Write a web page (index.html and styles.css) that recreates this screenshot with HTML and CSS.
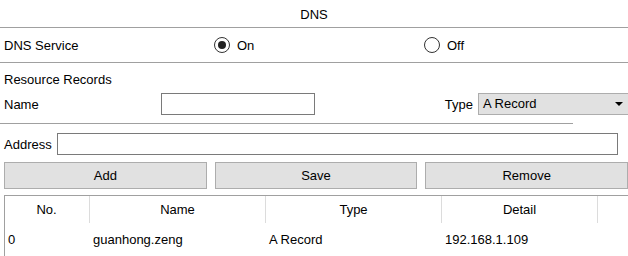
FILE: index.html
```html
<!DOCTYPE html>
<html lang="en">
<head>
    <meta charset="UTF-8">
    <title>DNS</title>
    <link rel="stylesheet" href="styles.css">
</head>
<body>
    <div class="page">
        <div class="title">DNS</div>
        <div class="service">
            <span class="label">DNS Service</span>
            <span class="option"><span class="radio checked"></span>On</span>
            <span class="option"><span class="radio"></span>Off</span>
        </div>
        <div class="section">Resource Records</div>
        <div class="name-row">
            <span class="name-label">Name</span>
            <div class="input name-input"></div>
            <span class="type-label">Type</span>
            <div class="select">A Record<span class="arrow"></span></div>
        </div>
        <div class="divider"></div>
        <div class="address-row">
            <span class="address-label">Address</span>
            <div class="input address-input"></div>
        </div>
        <div class="buttons">
            <button class="btn">Add</button>
            <button class="btn">Save</button>
            <button class="btn">Remove</button>
        </div>
        <div class="grid">
            <div class="head">No.</div>
            <div class="head">Name</div>
            <div class="head">Type</div>
            <div class="head">Detail</div>
            <div class="head last"></div>
            <div class="cell">0</div>
            <div class="cell">guanhong.zeng</div>
            <div class="cell">A Record</div>
            <div class="cell">192.168.1.109</div>
            <div class="cell"></div>
        </div>
    </div>
</body>
</html>
```

FILE: styles.css
```css
* {
    box-sizing: border-box;
}
body {
    margin: 0;
    overflow: hidden;
    font-family: 'Liberation Sans', Arial, sans-serif;
    font-size: 13px;
    color: #000;
    background-color: #fff;
}
.page {
    width: 628px;
    overflow: hidden;
}
.title {
    height: 28px;
    padding-top: 3px;
    line-height: 24px;
    text-align: center;
    border-bottom: 1px solid #a0a0a0;
}
.service {
    display: grid;
    grid-template-columns: 210px 210px 1fr;
    align-items: center;
    height: 35px;
    padding-left: 4px;
    border-bottom: 1px solid #a0a0a0;
}
.option {
    display: flex;
    align-items: center;
    gap: 7px;
}
.radio {
    width: 16px;
    height: 16px;
    border: 1px solid #333;
    border-radius: 50%;
    display: flex;
    justify-content: center;
    align-items: center;
}
.radio.checked::after {
    content: "";
    width: 8px;
    height: 8px;
    border-radius: 50%;
    background-color: #222;
}
.section {
    height: 28px;
    padding: 5px 0 0 4px;
    line-height: 23px;
}
.name-row {
    display: flex;
    align-items: center;
    height: 26px;
    padding-left: 4px;
}
.name-label {
    width: 157px;
}
.input {
    height: 22px;
    border: 1px solid #7a7a7a;
    background-color: #fff;
}
.name-input {
    width: 154px;
}
.type-label {
    margin-left: auto;
    margin-right: 5px;
}
.select {
    width: 150px;
    height: 22px;
    line-height: 20px;
    padding-left: 4px;
    background-color: #e1e1e1;
    border: 1px solid #adadad;
    border-right: none;
    display: flex;
    justify-content: space-between;
    align-items: center;
}
.arrow {
    width: 0;
    height: 0;
    margin-right: 5px;
    border-left: 4px solid transparent;
    border-right: 4px solid transparent;
    border-top: 4px solid #000;
}
.divider {
    width: 573px;
    height: 1px;
    margin-top: 6px;
    background-color: #a0a0a0;
}
.address-row {
    display: flex;
    align-items: center;
    padding: 9px 10px 0 4px;
}
.address-label {
    width: 53px;
}
.address-input {
    flex: 1;
}
.buttons {
    display: grid;
    grid-template-columns: 1fr 1fr 1fr;
    gap: 8px;
    margin-top: 7px;
    padding-left: 4px;
}
.btn {
    height: 27px;
    font-family: inherit;
    font-size: 13px;
    color: #000;
    background-color: #e1e1e1;
    border: 1px solid #adadad;
    padding: 0;
}
.grid {
    display: grid;
    grid-template-columns: 85px 176px 176px 156px 1fr;
    margin: 6px 0 0 4px;
    border-top: 1px solid #a0a0a0;
    border-left: 1px solid #a0a0a0;
    height: 70px;
    align-content: start;
}
.head {
    height: 27px;
    line-height: 27px;
    text-align: center;
    border-right: 1px solid #dcdcdc;
}
.head.last {
    border-right: none;
}
.cell {
    height: 34px;
    line-height: 34px;
    padding-left: 3px;
}
.grid .head:first-child {
    margin-left: -1px;
}
```
